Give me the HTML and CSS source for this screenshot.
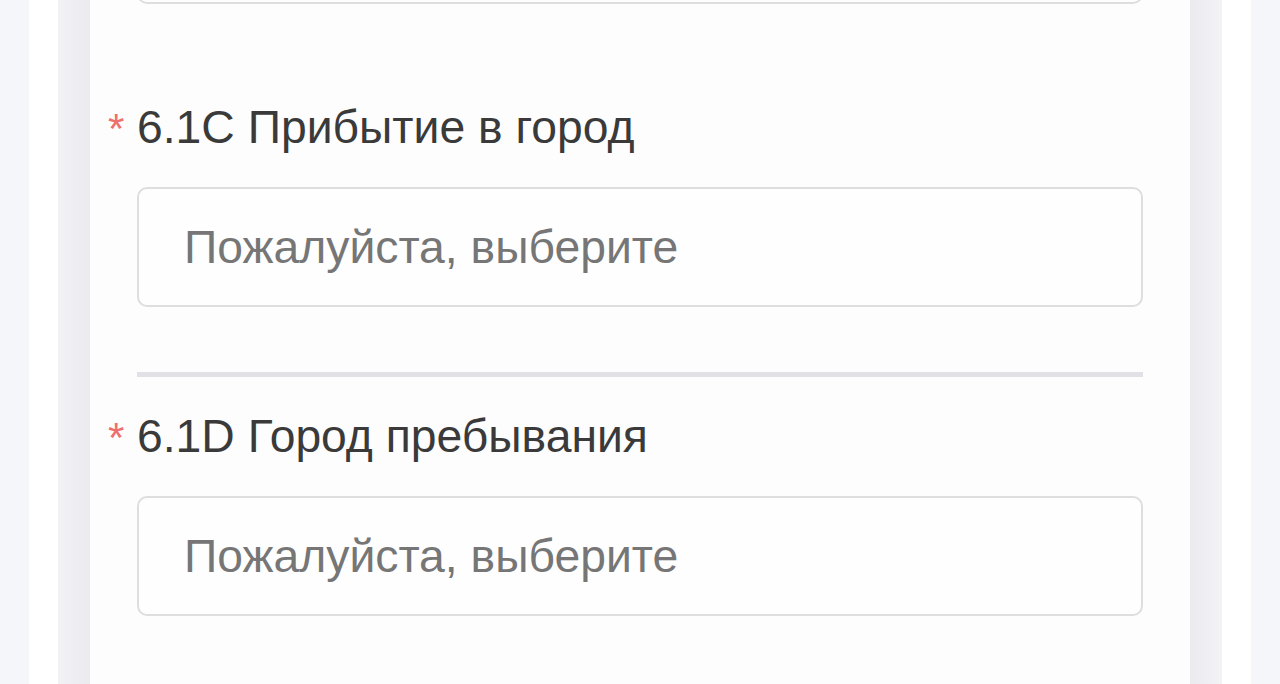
FILE: index.html
```html
<!DOCTYPE html>
<html lang="ru">
<head>
    <meta charset="UTF-8">
    <meta name="viewport" content="width=device-width, initial-scale=1.0">
    <title>Анкета</title>
    <link rel="stylesheet" href="styles.css">
</head>
<body>
    <div class="page">
        <div class="frame">
            <div class="card">
                <div class="form">
                    <div class="field field-prev">
                        <div class="select"></div>
                    </div>

                    <div class="field field-split">
                        <div class="label"><span class="req">*</span>6.1C Прибытие в город</div>
                        <div class="select">
                            <span class="placeholder">Пожалуйста, выберите</span>
                        </div>
                    </div>

                    <div class="field field-next">
                        <div class="label"><span class="req">*</span>6.1D Город пребывания</div>
                        <div class="select">
                            <span class="placeholder">Пожалуйста, выберите</span>
                        </div>
                    </div>
                </div>
            </div>
        </div>
    </div>
</body>
</html>
```

FILE: styles.css
```css
body {
    margin: 0;
    padding: 0;
    background-color: #f5f6fa;
    font-family: 'Liberation Sans', Arial, sans-serif;
    overflow: hidden;
}

.page {
    margin: 0 29px;
    padding: 0 29px;
    background-color: #fff;
    height: 684px;
}

.frame {
    height: 100%;
    padding: 0 32px;
    background: linear-gradient(90deg, #f2f2f6 0, #eaeaef 32px, #eaeaef calc(100% - 32px), #f3f3f7 100%);
}

.card {
    height: 100%;
    background-color: #fdfdfd;
    padding: 0 47px;
    overflow: hidden;
}

.form {
    margin-top: -116px; /* список прокручен вниз */
}

.field {
    padding: 28px 0 65px;
}

.field-prev {
    padding-top: 0;
}

.field-split {
    border-bottom: 5px solid #e1e1e6;
}

.field-next {
    padding-top: 29px;
}

.label {
    display: flex;
    align-items: baseline;
    margin-left: -29px;
    font-size: 46.3px;
    line-height: 60px;
    color: #3a3a3a;
}

.req {
    width: 29px;
    flex-shrink: 0;
    color: #ef6f6f;
    font-size: 42px;
}

.select {
    display: flex;
    align-items: center;
    height: 116px;
    margin-top: 28px;
    padding: 0 45px;
    border: 2px solid #dedede;
    border-radius: 10px;
    background-color: #fefefe;
}

.field-prev .select {
    margin-top: 0;
}

.placeholder {
    font-size: 46.3px;
    color: #767676;
}
```
